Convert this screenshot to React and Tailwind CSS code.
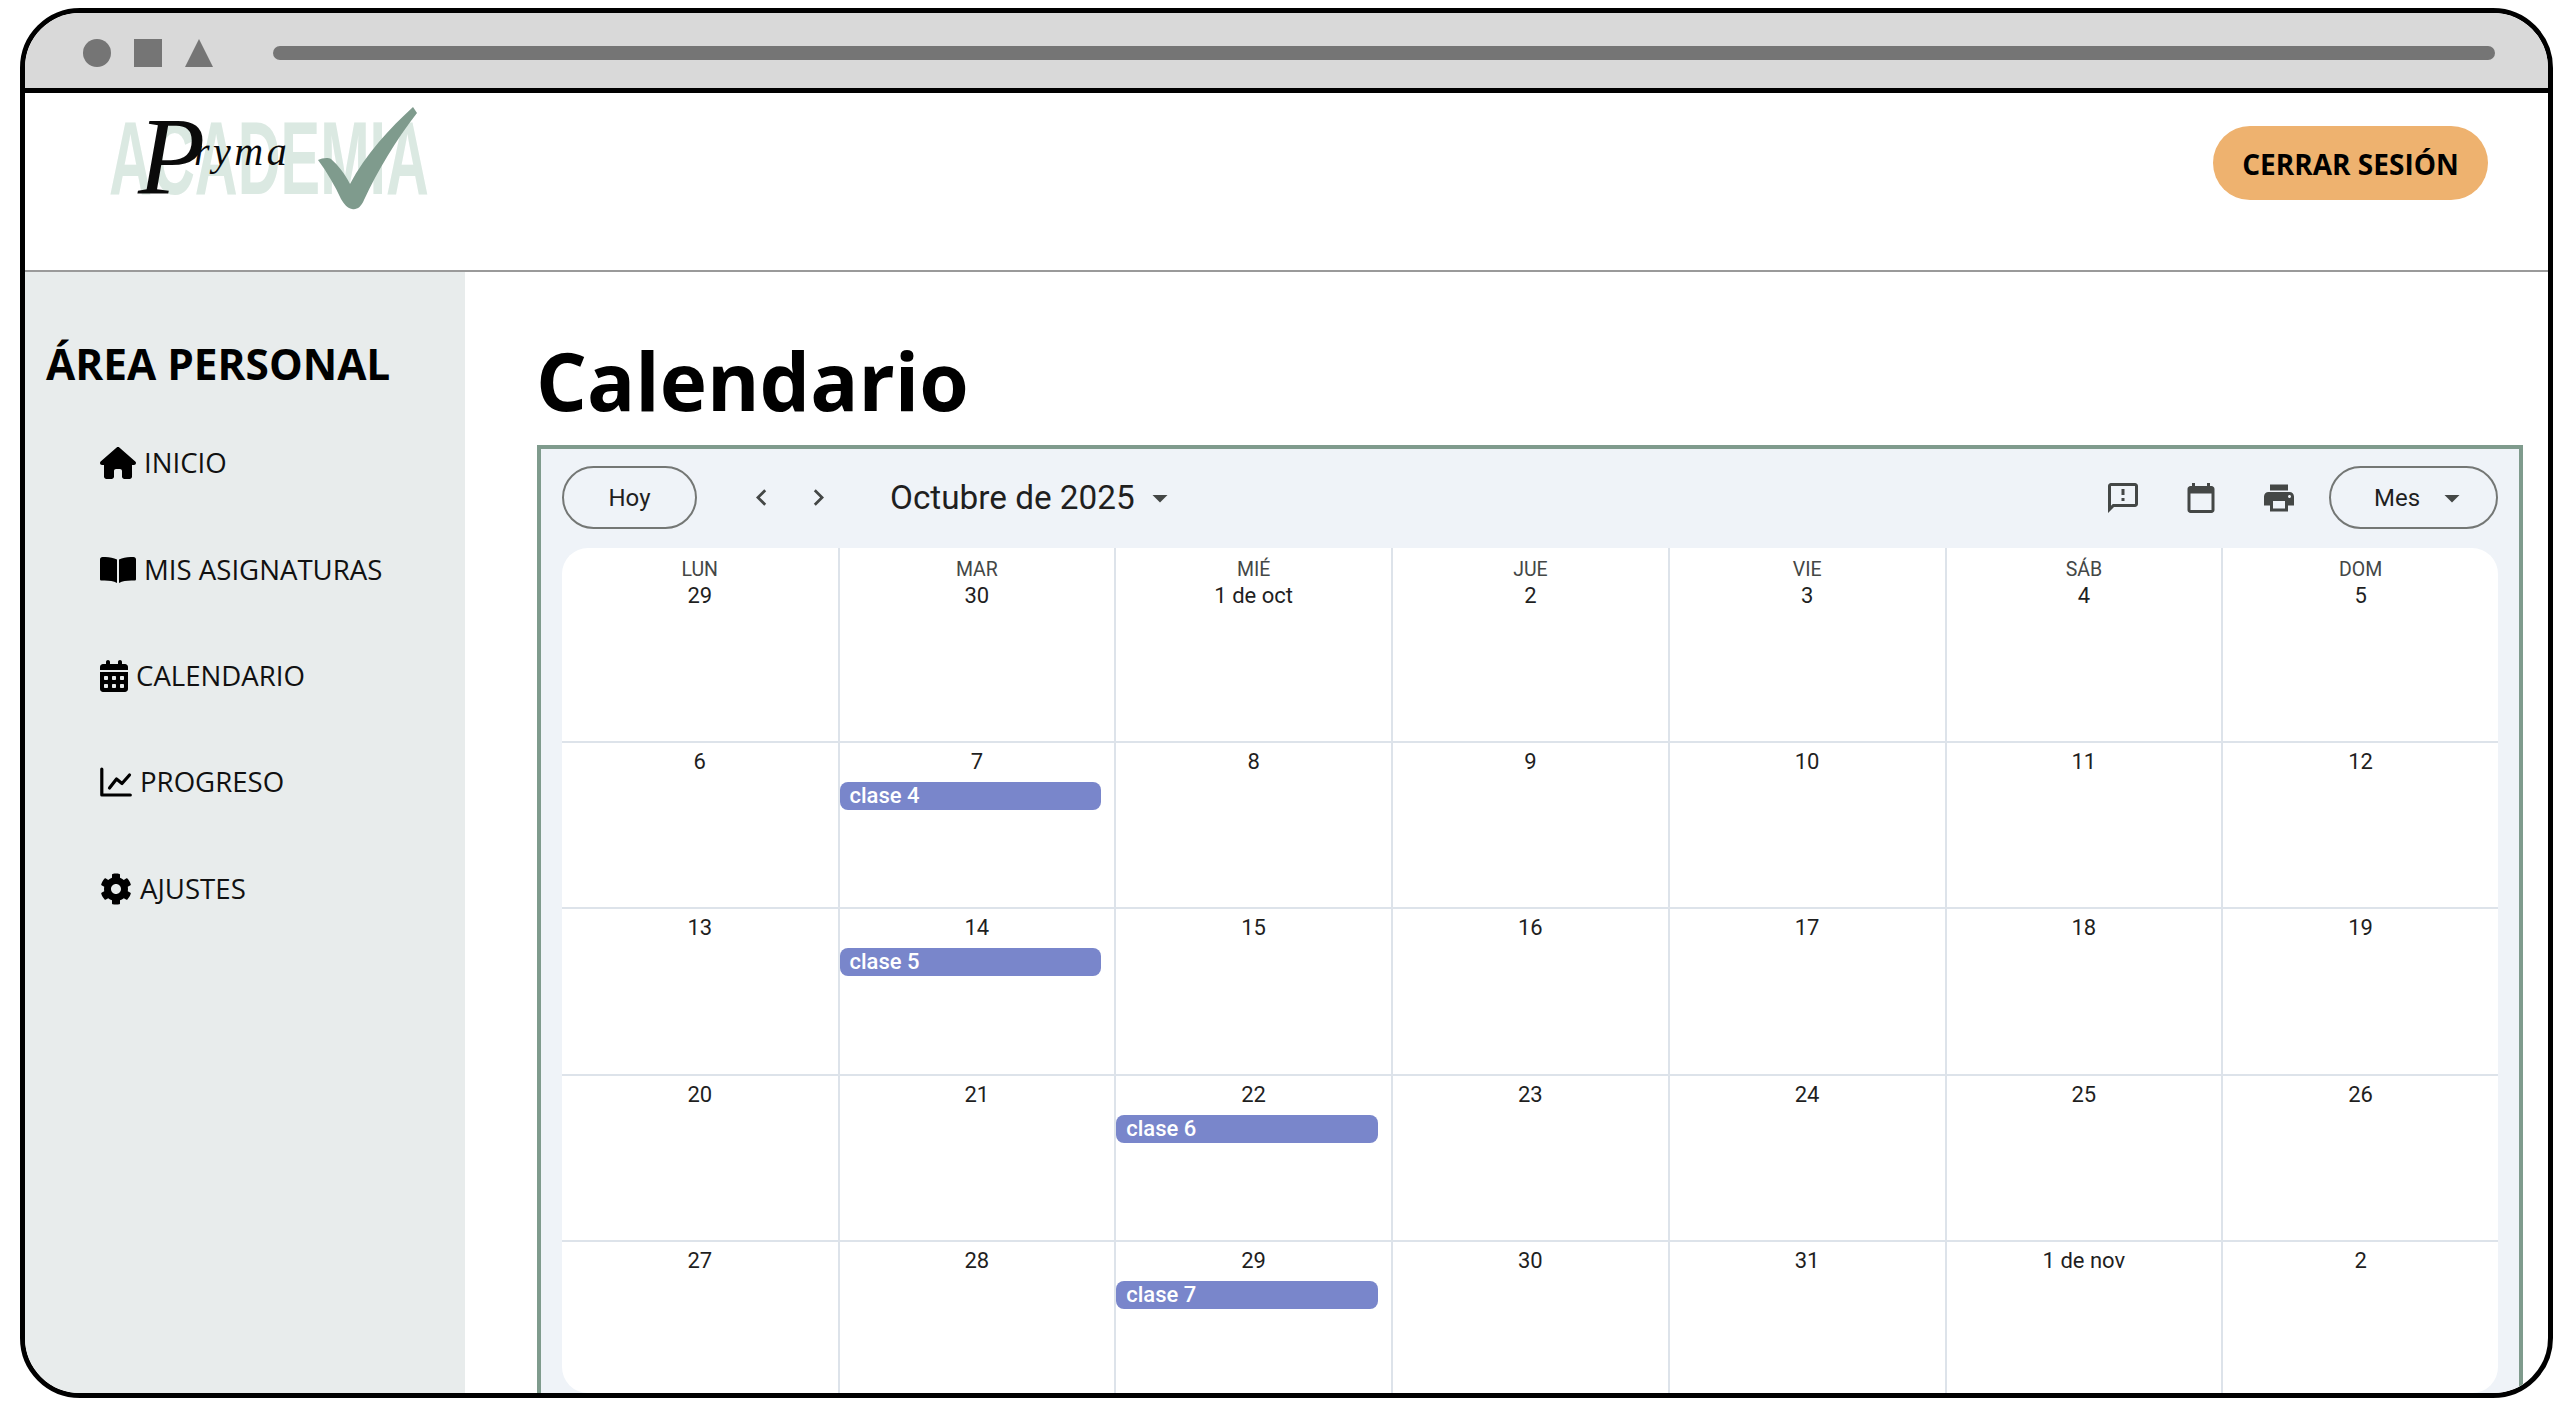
import { FaCog } from "react-icons/fa";
import { FaHouse, FaCalendarDays } from "react-icons/fa6";

function ChartIcon({ className }) {
  return (
    <svg viewBox="0 0 32 32" fill="none" stroke="currentColor" strokeLinecap="round" strokeLinejoin="round" className={className}>
      <path d="M1.8 3v26h28.5" strokeWidth="3.2" />
      <path d="M9.5 22 16.5 13l5.5 4.5 7.5-8.5" strokeWidth="3.2" />
    </svg>
  );
}

function BookIcon({ className }) {
  return (
    <svg viewBox="0 0 36 32" fill="currentColor" className={className}>
      <path d="M0 6.5C0 5 1 4 2.5 4 8 3.6 13 4.3 17 6.5V30C13 27.8 7.5 27.3 1.5 27.6 .6 27.6 0 27 0 26.2Z" />
      <path d="M36 6.5C36 5 35 4 33.5 4 28 3.6 23 4.3 19 6.5V30C23 27.8 28.5 27.3 34.5 27.6 35.4 27.6 36 27 36 26.2Z" />
    </svg>
  );
}

const navItems = [
  { label: "INICIO", Icon: FaHouse, iconClass: "h-[32px] w-[36px]" },
  { label: "MIS ASIGNATURAS", Icon: BookIcon, iconClass: "h-[32px] w-[36px]" },
  { label: "CALENDARIO", Icon: FaCalendarDays, iconClass: "h-[32px] w-[28px]" },
  { label: "PROGRESO", Icon: ChartIcon, iconClass: "h-[32px] w-[32px]" },
  { label: "AJUSTES", Icon: FaCog, iconClass: "h-[32px] w-[32px]" },
];

const weekDays = ["LUN", "MAR", "MIÉ", "JUE", "VIE", "SÁB", "DOM"];

const weeks = [
  ["29", "30", "1 de oct", "2", "3", "4", "5"],
  ["6", "7", "8", "9", "10", "11", "12"],
  ["13", "14", "15", "16", "17", "18", "19"],
  ["20", "21", "22", "23", "24", "25", "26"],
  ["27", "28", "29", "30", "31", "1 de nov", "2"],
];

const events = { "1-1": "clase 4", "2-1": "clase 5", "3-2": "clase 6", "4-2": "clase 7" };

function MdIcon({ d, size = 36, className = "" }) {
  return (
    <svg width={size} height={size} viewBox="0 0 24 24" fill="currentColor" className={className}>
      <path d={d} />
    </svg>
  );
}

function Logo() {
  return (
    <svg width="345" height="127" viewBox="95 93 345 127" className="block">
      <text
        x="109"
        y="194"
        fontSize="103"
        fontWeight="700"
        fill="#dbe9e2"
        textLength="320"
        lengthAdjust="spacingAndGlyphs"
        className="font-['Liberation_Sans']"
      >
        ACADEMIA
      </text>
      <text x="138" y="193" fontSize="110" fill="#0a0a0a" className="font-['Liberation_Serif'] italic">
        P
      </text>
      <text x="194" y="165" fontSize="40" letterSpacing="3.5" fill="#0a0a0a" className="font-['Liberation_Serif'] italic">
        ryma
      </text>
      <path
        d="M318 160 C322 158 328 157 331 159 C338 165 345 174 350 184 C365 155 390 128 413 107 L417 113 C396 140 378 170 364 200 C361 207 357 210 352 209 C347 208 344 204 341 199 C335 186 327 172 318 160 Z"
        fill="#7f9b8d"
      />
    </svg>
  );
}

function Sidebar() {
  return (
    <aside className="w-[440px] shrink-0 bg-[#e8ecec] font-['Open_Sans',sans-serif] text-black">
      <h2 className="mt-[66px] ml-[21px] text-[42.4px] leading-[52px] font-bold whitespace-nowrap">ÁREA PERSONAL</h2>
      <nav className="mt-[51px] ml-[75px] flex flex-col gap-[62.4px]">
        {navItems.map(({ label, Icon, iconClass }) => (
          <div key={label} className="flex h-[44px] items-center gap-[8px] text-[27.6px] text-[#111]">
            <Icon className={"shrink-0 text-black " + iconClass} />
            <span className="whitespace-nowrap">{label}</span>
          </div>
        ))}
      </nav>
    </aside>
  );
}

function Toolbar() {
  return (
    <div className="flex h-[99px] shrink-0 items-start px-[21px] pt-[17px] font-['Roboto',sans-serif] text-[#1f1f1f]">
      <button className="h-[63px] w-[135px] rounded-full border-2 border-[#747775] text-[24px]">Hoy</button>
      <div className="flex h-[63px] items-center text-[#444746]">
        <MdIcon size={33} className="ml-[48px]" d="M15.41 7.41 14 6l-6 6 6 6 1.41-1.41L10.83 12z" />
        <MdIcon size={33} className="ml-[24px]" d="M10 6 8.59 7.41 13.17 12l-4.58 4.59L10 18l6-6z" />
        <span className="ml-[55px] text-[33.3px] text-[#1f1f1f]">Octubre de 2025</span>
        <MdIcon size={36} className="ml-[7px]" d="M7 10l5 5 5-5z" />
      </div>
      <div className="ml-auto flex h-[63px] items-center gap-[42px] text-[#444746]">
        <MdIcon d="M20 2H4c-1.1 0-2 .9-2 2v18l4-4h14c1.1 0 2-.9 2-2V4c0-1.1-.9-2-2-2zm0 14H5.17L4 17.17V4h16v12zM11 12h2v2h-2zm0-6h2v4h-2z" />
        <MdIcon d="M19 4h-1V2h-2v2H8V2H6v2H5c-1.1 0-2 .9-2 2v14c0 1.1.9 2 2 2h14c1.1 0 2-.9 2-2V6c0-1.1-.9-2-2-2zm0 16H5V9h14v11z" />
        <MdIcon d="M19 8H5c-1.66 0-3 1.34-3 3v6h4v4h12v-4h4v-6c0-1.66-1.34-3-3-3zm-3 11H8v-5h8v5zm3-7c-.55 0-1-.45-1-1s.45-1 1-1 1 .45 1 1-.45 1-1 1zm-1-9H6v4h12V3z" />
      </div>
      <button className="ml-[32px] flex h-[63px] w-[169px] items-center rounded-full border-2 border-[#747775] pl-[43px] text-[24px] text-[#1f1f1f]">
        Mes
        <MdIcon size={36} className="ml-[14px] text-[#444746]" d="M7 10l5 5 5-5z" />
      </button>
    </div>
  );
}

function MonthGrid() {
  return (
    <div className="mx-[21px] grid flex-1 grid-cols-[275.5px_repeat(6,1fr)] grid-rows-[195px_166px_167px_166px_1fr] overflow-hidden rounded-[26px] bg-white font-['Roboto',sans-serif] text-[#1f1f1f]">
      {weeks.map((week, row) =>
        week.map((date, col) => (
          <div
            key={row + "-" + col}
            className={
              "border-[#dde3ea] " +
              (row === 0 ? "pt-[9px] " : "pt-[6px] ") +
              (col > 0 ? "border-l-2 " : "") +
              (row < 4 ? "border-b-2" : "")
            }
          >
            {row === 0 && (
              <div className="text-center text-[19.5px] leading-[26px] text-[#444746]">{weekDays[col]}</div>
            )}
            <div className="text-center text-[22px] leading-[26px]">{date}</div>
            {events[row + "-" + col] && (
              <div className="mt-[7px] mr-[13px] h-[28px] rounded-[8px] bg-[#7986cb] pl-[10px] text-[22px] leading-[28px] font-medium text-white">
                {events[row + "-" + col]}
              </div>
            )}
          </div>
        ))
      )}
    </div>
  );
}

export default function App() {
  return (
    <div className="mt-[8px] ml-[20px] flex h-[1390px] w-[2533px] flex-col overflow-hidden rounded-[60px] border-[5px] border-black bg-white">
      {/* browser bar */}
      <div className="flex h-[80px] shrink-0 items-center gap-[23px] border-b-[5px] border-black bg-[#d9d9d9] pt-[4px] pr-[53px] pl-[58px]">
        <div className="h-[28px] w-[28px] rounded-full bg-[#757575]" />
        <div className="h-[28px] w-[28px] bg-[#757575]" />
        <svg width="28" height="28" viewBox="0 0 28 28" fill="#757575">
          <path d="M14 0 28 28H0z" />
        </svg>
        <div className="ml-[37px] h-[14px] flex-1 rounded-full bg-[#757575]" />
      </div>

      {/* header */}
      <header className="flex h-[179px] shrink-0 items-start justify-between border-b-2 border-[#9a9a9a] pr-[60px] pl-[70px]">
        <Logo />
        <button className="mt-[33px] h-[74px] w-[275px] rounded-full bg-[#eeb26f] pt-[2px] font-['Open_Sans',sans-serif] text-[28px] font-bold text-black">
          CERRAR SESIÓN
        </button>
      </header>

      <div className="flex min-h-0 flex-1">
        <Sidebar />
        <main className="flex min-w-0 flex-1 flex-col pr-[25px] pl-[72px]">
          <h1 className="-ml-[1px] h-[173px] shrink-0 pt-[53px] font-['Open_Sans',sans-serif] text-[80px] leading-[110px] font-bold text-black">
            Calendario
          </h1>
          <section className="flex flex-1 flex-col border-x-4 border-t-4 border-[#7f9b8d] bg-[#eff3f8]">
            <Toolbar />
            <MonthGrid />
          </section>
        </main>
      </div>
    </div>
  );
}
